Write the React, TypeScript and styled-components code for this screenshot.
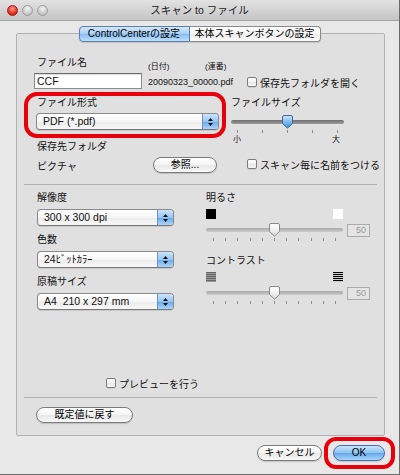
import React from 'react';
import styled, { createGlobalStyle } from 'styled-components';

const GlobalStyle = createGlobalStyle`
  html, body {
    margin: 0;
    padding: 0;
    background: #e8e8e8;
  }
  body {
    font-family: "Liberation Sans", "Noto Sans CJK JP", sans-serif;
  }
  * {
    box-sizing: border-box;
  }
`;

const Window = styled.div`
  width: 400px;
  height: 475px;
  background: #e8e8e8;
  border-right: 1px solid #6b6b6b;
  border-bottom: 1px solid #6b6b6b;
  display: flex;
  flex-direction: column;
  overflow: hidden;
  font-size: 10px;
  color: #111;
`;

const TitleBar = styled.div`
  height: 21px;
  flex: none;
  display: grid;
  grid-template-columns: 1fr auto 1fr;
  align-items: center;
  background: linear-gradient(#e2e2e2, #c5c5c5);
  border-bottom: 1px solid #a3a3a3;
`;

const Lights = styled.div`
  display: flex;
  gap: 4px;
  padding-left: 7px;
`;

const Light = styled.span<{ $red?: boolean }>`
  width: 11px;
  height: 11px;
  border-radius: 50%;
  border: 1px solid ${p => (p.$red ? '#a01c12' : '#9c9c9c')};
  background: ${p =>
    p.$red
      ? 'radial-gradient(circle at 50% 30%, #ff9a90 0%, #e8362b 55%, #b8170e 100%)'
      : 'radial-gradient(circle at 50% 30%, #f4f4f4 0%, #cfcfcf 55%, #b0b0b0 100%)'};
`;

const Title = styled.div`
  font-size: 10.5px;
  color: #222;
  line-height: 14px;
`;

const TabStrip = styled.div`
  display: flex;
  justify-content: center;
  margin-top: 5px;
  height: 16px;
  position: relative;
  z-index: 1;
  flex: none;
`;

const Tab = styled.div<{ $active?: boolean; $width: number }>`
  width: ${p => p.$width}px;
  height: 16px;
  font-size: 10px;
  line-height: 14px;
  text-align: center;
  color: #000;
  border: 1px solid ${p => (p.$active ? '#5b7fb3' : '#8a8a8a')};
  border-left-width: ${p => (p.$active ? '1px' : '0')};
  border-radius: ${p => (p.$active ? '4px 0 0 4px' : '0 4px 4px 0')};
  background: ${p =>
    p.$active
      ? 'linear-gradient(#d4e8fb, #a7cff5 50%, #86bdf0 51%, #bfe0fb)'
      : 'linear-gradient(#ffffff, #f6f6f6 50%, #ebebeb 51%, #fbfbfb)'};
  box-shadow: 0 1px 1px rgba(0, 0, 0, 0.12);
`;

const Box = styled.div`
  margin: -9px 0 0 16px;
  width: 369px;
  height: 403px;
  flex: none;
  border: 1px solid #b2b2b2;
  border-radius: 2px;
  background: #e0e0e0;
  padding: 0 7px;
  display: flex;
  flex-direction: column;
`;

const NameRow = styled.div`
  display: flex;
  align-items: flex-start;
  margin-top: 23px;
  height: 32px;
`;

const NameField = styled.div`
  margin-left: 10px;
  width: 108px;
  display: flex;
  flex-direction: column;
`;

const Label = styled.div<{ $indent?: number; $top?: number }>`
  font-size: 10px;
  line-height: 12px;
  padding-left: ${p => p.$indent ?? 0}px;
  margin-top: ${p => p.$top ?? 0}px;
  white-space: nowrap;
`;

const TextInput = styled.div`
  margin-top: 4px;
  height: 16px;
  border: 1px solid #8c8c8c;
  border-top-color: #6c6c6c;
  background: #fff;
  box-shadow: inset 0 1px 1px rgba(0, 0, 0, 0.15);
  font-size: 10.5px;
  line-height: 14px;
  padding-left: 2px;
`;

const DateCol = styled.div`
  margin-left: 6px;
  width: 99px;
  flex: none;
`;

const DateHeads = styled.div`
  display: flex;
  margin-top: 4px;
  font-size: 8px;
  line-height: 11px;
  & > span:first-child {
    width: 57px;
  }
`;

const DateValue = styled.div`
  margin-top: 4px;
  font-size: 9px;
  line-height: 12px;
  white-space: nowrap;
`;

const CheckRow = styled.div<{ $top?: number; $left?: number; $pushDown?: boolean }>`
  display: flex;
  align-items: center;
  gap: 3px;
  height: 12px;
  margin-top: ${p => (p.$pushDown ? 'auto' : `${p.$top ?? 0}px`)};
  margin-bottom: ${p => (p.$pushDown ? '8px' : '0')};
  padding-left: ${p => p.$left ?? 0}px;
  font-size: 10px;
  white-space: nowrap;
`;

const CheckBox = styled.span`
  width: 10px;
  height: 10px;
  flex: none;
  border: 1px solid #7c7c7c;
  border-radius: 2px;
  background: linear-gradient(#ffffff, #f2f2f2 50%, #e6e6e6 51%, #f7f7f7);
  box-shadow: 0 1px 0 rgba(0, 0, 0, 0.08);
`;

const TwoCol = styled.div`
  display: flex;
  margin-top: 3px;
`;

const LeftCol = styled.div`
  width: 207px;
  flex: none;
  display: flex;
  flex-direction: column;
`;

const RedFrame = styled.div`
  width: 202px;
  border: 4px solid #e8000b;
  border-radius: 13px;
  padding: 1px 4px 4px 8px;
`;

const SelectBox = styled.div<{ $width: number; $top?: number }>`
  width: ${p => p.$width}px;
  height: 17px;
  margin-top: ${p => p.$top ?? 0}px;
  display: flex;
  border: 1px solid #8a8a8a;
  border-bottom-color: #777;
  border-radius: 4px;
  overflow: hidden;
  background: linear-gradient(#ffffff, #f6f6f6 50%, #eaeaea 51%, #f8f8f8);
  box-shadow: 0 1px 1px rgba(0, 0, 0, 0.1);
`;

const SelectText = styled.span`
  flex: 1;
  padding-left: 6px;
  font-size: 10.5px;
  line-height: 15px;
  white-space: pre;
`;

const SelectArrows = styled.span`
  width: 16px;
  flex: none;
  display: flex;
  align-items: center;
  justify-content: center;
  border-left: 1px solid #6f8fbd;
  background: linear-gradient(#cde4fb, #96c6f3 50%, #68a9ea 51%, #acd5fb);
`;

const FolderLine = styled.div`
  display: flex;
  align-items: center;
  height: 16px;
  margin-top: 4px;
  padding-left: 13px;
`;

const FolderName = styled.span`
  width: 116px;
  font-size: 10px;
`;

const PillButton = styled.button<{ $width: number; $primary?: boolean }>`
  width: ${p => p.$width}px;
  height: 16px;
  padding: 0;
  border-radius: 8px;
  font-family: inherit;
  font-size: 10px;
  line-height: 14px;
  color: #000;
  border: 1px solid ${p => (p.$primary ? '#4a6ea8' : '#7b7b7b')};
  background: ${p =>
    p.$primary
      ? 'linear-gradient(#c9e3fb, #8cc2f1 50%, #62a6ea 51%, #a8d6fc)'
      : 'linear-gradient(#ffffff, #f5f5f5 50%, #e7e7e7 51%, #f8f8f8)'};
  box-shadow: 0 1px 1px rgba(0, 0, 0, 0.15);
`;

const RightCol = styled.div`
  flex: 1;
  display: flex;
  flex-direction: column;
  padding-top: 5px;
`;

const SliderBox = styled.div<{ $width: number; $top?: number }>`
  position: relative;
  width: ${p => p.$width}px;
  height: 14px;
  flex: none;
  display: flex;
  align-items: center;
  margin-top: ${p => p.$top ?? 0}px;
`;

const Rail = styled.div<{ $dark?: boolean }>`
  width: 100%;
  height: 4px;
  border-radius: 2px;
  background: ${p =>
    p.$dark
      ? 'linear-gradient(#6f6f6f, #9a9a9a)'
      : 'linear-gradient(#a9a9a9, #cbcbcb)'};
`;

const ThumbMark = styled.svg`
  position: absolute;
  top: 0;
`;

const Ticks = styled.div<{ $inset: number; $width: number }>`
  display: flex;
  justify-content: space-between;
  width: ${p => p.$width}px;
  height: 3px;
  margin-top: 1px;
  padding: 0 ${p => p.$inset}px;
`;

const Tick = styled.span`
  width: 1px;
  height: 3px;
  background: #8d8d8d;
`;

const SizeLabels = styled.div`
  display: flex;
  justify-content: space-between;
  width: 113px;
  margin-top: 2px;
  padding: 0 4px 0 2px;
  font-size: 8px;
  line-height: 10px;
`;

const Separator = styled.div<{ $top?: number }>`
  height: 1px;
  flex: none;
  margin-top: ${p => p.$top ?? 0}px;
  background: #b1b1b1;
`;

const Middle = styled.div`
  flex: 1;
  display: flex;
  flex-direction: column;
`;

const Columns = styled.div`
  display: flex;
  margin-top: 7px;
`;

const PopupCol = styled.div`
  width: 182px;
  flex: none;
  padding-left: 13px;
  display: flex;
  flex-direction: column;
  gap: 8px;
`;

const PopupItem = styled.div`
  display: flex;
  flex-direction: column;
`;

const SlidersCol = styled.div`
  display: flex;
  flex-direction: column;
  gap: 14px;
`;

const SliderGroup = styled.div`
  display: flex;
  flex-direction: column;
`;

const SwatchRow = styled.div`
  display: flex;
  justify-content: space-between;
  width: 137px;
  height: 10px;
  margin-top: 5px;
`;

const Swatch = styled.span<{ $fill: string }>`
  width: 10px;
  height: 10px;
  background: ${p => p.$fill};
  border: ${p => (p.$fill === '#fff' ? '0' : '1px solid #000')};
`;

const SliderRow = styled.div`
  display: flex;
  align-items: center;
  gap: 4px;
  margin-top: 4px;
`;

const ValueBox = styled.div`
  width: 23px;
  height: 13px;
  border: 1px solid #acacac;
  background: #e4e4e4;
  color: #9a9a9a;
  font-size: 9px;
  line-height: 11px;
  text-align: right;
  padding-right: 3px;
`;

const Footer = styled.div`
  padding: 9px 0 0 12px;
  height: 37px;
  flex: none;
`;

const BottomBar = styled.div`
  display: flex;
  justify-content: flex-end;
  align-items: center;
  margin-top: 1px;
  padding-right: 4px;
  gap: 2px;
`;

const OkFrame = styled.div`
  border: 4px solid #e8000b;
  border-radius: 12px;
  padding: 4px 6px 4px 5px;
`;

const Arrows = () => (
  <svg width="7" height="10" viewBox="0 0 7 10">
    <path d="M1 4 L3.5 1 L6 4 Z" fill="#111" />
    <path d="M1 6 L3.5 9 L6 6 Z" fill="#111" />
  </svg>
);

const Select: React.FC<{ width: number; value: string; top?: number }> = ({ width, value, top }) => (
  <SelectBox $width={width} $top={top}>
    <SelectText>{value}</SelectText>
    <SelectArrows>
      <Arrows />
    </SelectArrows>
  </SelectBox>
);

type SliderProps = {
  width: number;
  inset: number;
  value: number;
  blue?: boolean;
  top?: number;
};

const Slider: React.FC<SliderProps> = ({ width, inset, value, blue, top }) => {
  const left = inset + value * (width - inset * 2) - 5.5;
  const gradId = blue ? 'thumbBlue' : 'thumbGray';
  return (
    <SliderBox $width={width} $top={top}>
      <Rail $dark={blue} />
      <ThumbMark width="11" height="14" viewBox="0 0 11 14" style={{ left }}>
        <defs>
          <linearGradient id={gradId} x1="0" y1="0" x2="0" y2="1">
            {blue ? (
              <>
                <stop offset="0" stopColor="#d4e9fd" />
                <stop offset="0.5" stopColor="#7fb9f0" />
                <stop offset="1" stopColor="#3f8ee0" />
              </>
            ) : (
              <>
                <stop offset="0" stopColor="#ffffff" />
                <stop offset="0.5" stopColor="#f0f0f0" />
                <stop offset="1" stopColor="#d6d6d6" />
              </>
            )}
          </linearGradient>
        </defs>
        <path
          d="M2 0.5 H9 A1.5 1.5 0 0 1 10.5 2 V8.5 L5.5 13.2 L0.5 8.5 V2 A1.5 1.5 0 0 1 2 0.5 Z"
          fill={`url(#${gradId})`}
          stroke={blue ? '#41679e' : '#8a8a8a'}
          strokeWidth="1"
        />
      </ThumbMark>
    </SliderBox>
  );
};

const TickRow: React.FC<{ width: number; inset: number; count: number }> = ({ width, inset, count }) => (
  <Ticks $width={width} $inset={inset}>
    {Array.from({ length: count }).map((_, i) => (
      <Tick key={i} />
    ))}
  </Ticks>
);

const ContrastIcon: React.FC<{ strong?: boolean }> = ({ strong }) => (
  <svg width="10" height="10" viewBox="0 0 10 10">
    <rect width="10" height="10" fill={strong ? '#ffffff' : '#a4a4a4'} />
    {[0, 2, 4, 6, 8].map(y => (
      <rect key={y} x="0" y={y} width="10" height="1.2" fill={strong ? '#000' : '#666'} />
    ))}
  </svg>
);

const App: React.FC = () => {
  return (
    <>
      <GlobalStyle />
      <Window>
        <TitleBar>
          <Lights>
            <Light $red />
            <Light />
            <Light />
          </Lights>
          <Title>スキャン to ファイル</Title>
          <div />
        </TitleBar>

        <TabStrip>
          <Tab $active $width={111}>ControlCenterの設定</Tab>
          <Tab $width={131}>本体スキャンボタンの設定</Tab>
        </TabStrip>

        <Box>
          <NameRow>
            <NameField>
              <Label $indent={3}>ファイル名</Label>
              <TextInput>CCF</TextInput>
            </NameField>
            <DateCol>
              <DateHeads>
                <span>(日付)</span>
                <span>(連番)</span>
              </DateHeads>
              <DateValue>20090323_00000.pdf</DateValue>
            </DateCol>
            <CheckRow $top={19}>
              <CheckBox />
              保存先フォルダを開く
            </CheckRow>
          </NameRow>

          <TwoCol>
            <LeftCol>
              <RedFrame>
                <Label $indent={1}>ファイル形式</Label>
                <Select width={183} value="PDF (*.pdf)" top={4} />
              </RedFrame>
              <Label $indent={13} $top={3}>保存先フォルダ</Label>
              <FolderLine>
                <FolderName>ピクチャ</FolderName>
                <PillButton $width={64}>参照...</PillButton>
              </FolderLine>
            </LeftCol>
            <RightCol>
              <Label>ファイルサイズ</Label>
              <Slider width={113} inset={6} value={0.5} blue top={6} />
              <TickRow width={113} inset={6} count={5} />
              <SizeLabels>
                <span>小</span>
                <span>大</span>
              </SizeLabels>
              <CheckRow $top={13} $left={16}>
                <CheckBox />
                スキャン毎に名前をつける
              </CheckRow>
            </RightCol>
          </TwoCol>

          <Separator $top={11} />

          <Middle>
            <Columns>
              <PopupCol>
                <PopupItem>
                  <Label>解像度</Label>
                  <Select width={137} value="300 x 300 dpi" top={5} />
                </PopupItem>
                <PopupItem>
                  <Label>色数</Label>
                  <Select width={137} value="24ﾋﾞｯﾄｶﾗｰ" top={5} />
                </PopupItem>
                <PopupItem>
                  <Label>原稿サイズ</Label>
                  <Select width={137} value="A4  210 x 297 mm" top={5} />
                </PopupItem>
              </PopupCol>
              <SlidersCol>
                <SliderGroup>
                  <Label>明るさ</Label>
                  <SwatchRow>
                    <Swatch $fill="#000" />
                    <Swatch $fill="#fff" />
                  </SwatchRow>
                  <SliderRow>
                    <Slider width={137} inset={7} value={0.5} />
                    <ValueBox>50</ValueBox>
                  </SliderRow>
                  <TickRow width={137} inset={7} count={11} />
                </SliderGroup>
                <SliderGroup>
                  <Label>コントラスト</Label>
                  <SwatchRow>
                    <ContrastIcon />
                    <ContrastIcon strong />
                  </SwatchRow>
                  <SliderRow>
                    <Slider width={137} inset={7} value={0.5} />
                    <ValueBox>50</ValueBox>
                  </SliderRow>
                  <TickRow width={137} inset={7} count={11} />
                </SliderGroup>
              </SlidersCol>
            </Columns>
            <CheckRow $left={82} $pushDown>
              <CheckBox />
              プレビューを行う
            </CheckRow>
          </Middle>

          <Separator />

          <Footer>
            <PillButton $width={97}>既定値に戻す</PillButton>
          </Footer>
        </Box>

        <BottomBar>
          <PillButton $width={65}>キャンセル</PillButton>
          <OkFrame>
            <PillButton $width={52} $primary>OK</PillButton>
          </OkFrame>
        </BottomBar>
      </Window>
    </>
  );
};

export default App;
